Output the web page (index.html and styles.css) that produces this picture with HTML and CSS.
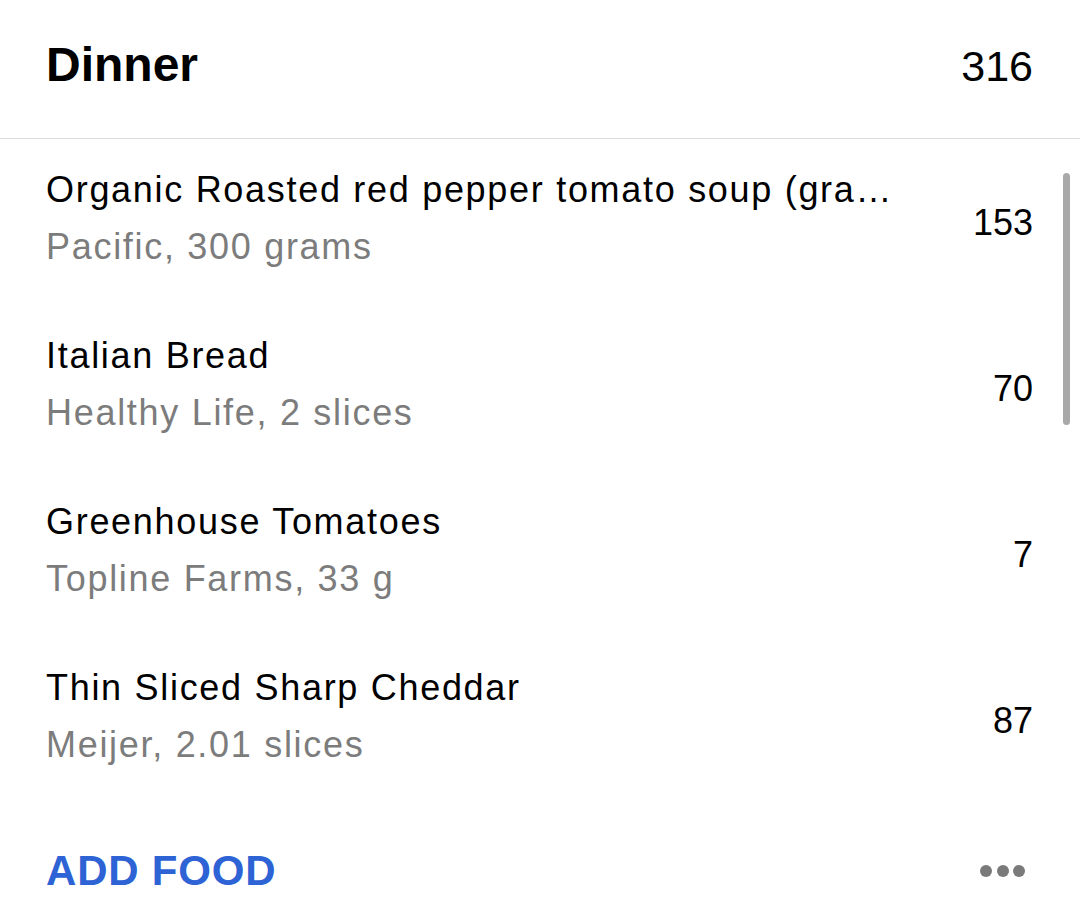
FILE: index.html
```html
<!DOCTYPE html>
<html lang="en">
<head>
<meta charset="utf-8">
<title>Dinner</title>
<link rel="stylesheet" href="styles.css">
</head>
<body>
<div class="screen">
  <header class="meal-header">
    <h1 class="meal-title">Dinner</h1>
    <span class="meal-total">316</span>
  </header>
  <ul class="food-list">
    <li class="food-row">
      <div class="food-info">
        <div class="food-name">Organic Roasted red pepper tomato soup (gra…</div>
        <div class="food-detail">Pacific, 300 grams</div>
      </div>
      <span class="food-cal">153</span>
    </li>
    <li class="food-row">
      <div class="food-info">
        <div class="food-name">Italian Bread</div>
        <div class="food-detail">Healthy Life, 2 slices</div>
      </div>
      <span class="food-cal">70</span>
    </li>
    <li class="food-row">
      <div class="food-info">
        <div class="food-name">Greenhouse Tomatoes</div>
        <div class="food-detail">Topline Farms, 33 g</div>
      </div>
      <span class="food-cal">7</span>
    </li>
    <li class="food-row">
      <div class="food-info">
        <div class="food-name">Thin Sliced Sharp Cheddar</div>
        <div class="food-detail">Meijer, 2.01 slices</div>
      </div>
      <span class="food-cal">87</span>
    </li>
  </ul>
  <footer class="meal-footer">
    <span class="add-food">ADD FOOD</span>
    <span class="more-dots"><i></i><i></i><i></i></span>
  </footer>
  <div class="scrollbar"></div>
</div>
</body>
</html>
```

FILE: styles.css
```css
html, body {
  margin: 0;
  padding: 0;
  background: #ffffff;
}

body {
  font-family: "Liberation Sans", Arial, sans-serif;
  color: #000000;
}

.screen {
  position: relative;
  width: 1080px;
  height: 912px;
  overflow: hidden;
}

.meal-header {
  display: flex;
  align-items: baseline;
  justify-content: space-between;
  height: 139px;
  box-sizing: border-box;
  padding: 37px 47px 0 46px;
  border-bottom: 1px solid #dcdcdc;
}

.meal-title {
  margin: 0;
  font-size: 48px;
  line-height: 56px;
  font-weight: 700;
}

.meal-total {
  font-size: 43px;
  line-height: 56px;
}

.food-list {
  list-style: none;
  margin: 0;
  padding: 0;
}

.food-row {
  display: flex;
  align-items: center;
  justify-content: space-between;
  height: 166px;
  box-sizing: border-box;
  padding: 22px 47px 30px 46px;
}

.food-info {
  min-width: 0;
}

.food-name,
.food-detail {
  font-size: 36px;
  line-height: 57px;
  letter-spacing: 1.7px;
  white-space: nowrap;
}

.food-detail {
  color: #7c7c7c;
}

.food-cal {
  font-size: 36px;
  line-height: 57px;
  padding-top: 9px;
}

.meal-footer {
  display: flex;
  align-items: center;
  justify-content: space-between;
  padding: 38px 55px 0 46px;
}

.add-food {
  font-size: 42px;
  line-height: 60px;
  font-weight: 700;
  letter-spacing: 0.8px;
  color: #2d63d5;
}

.more-dots {
  display: flex;
  gap: 4.5px;
}

.more-dots i {
  display: block;
  width: 12px;
  height: 12px;
  border-radius: 50%;
  background: #7a7a7a;
}

.scrollbar {
  position: absolute;
  left: 1063px;
  top: 173px;
  width: 7px;
  height: 252px;
  border-radius: 4px;
  background: #a9a9a9;
}
```
